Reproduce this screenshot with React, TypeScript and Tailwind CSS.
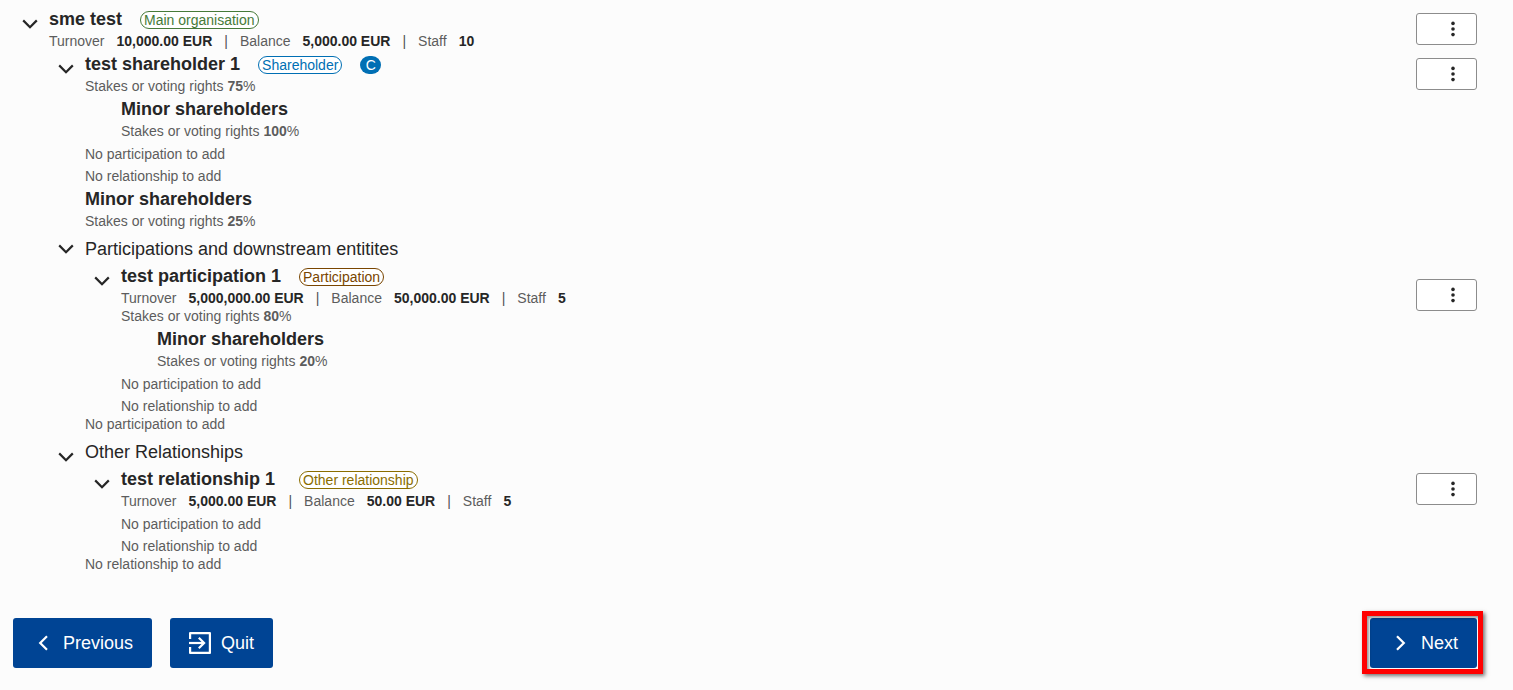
import React, { ReactNode, useState } from "react";

function Chevron({ className }: { className: string }) {
  return (
    <svg viewBox="0 0 16 10" className={className} fill="none" stroke="currentColor" strokeWidth="2.2" aria-hidden="true">
      <path d="M1.2 1.4 L8 8.2 L14.8 1.4" />
    </svg>
  );
}

function Toggle({ open, onClick, label, height = "h-[38px]" }: { open: boolean; onClick: () => void; label: string; height?: string }) {
  return (
    <button
      type="button"
      aria-expanded={open}
      aria-label={label}
      onClick={onClick}
      className={`flex w-9 shrink-0 items-center justify-center pr-0.5 text-[#262626] ${height}`}
    >
      <Chevron className={open ? "h-[10px] w-4" : "h-[10px] w-4 -rotate-90"} />
    </button>
  );
}

function Pill({ color, children }: { color: string; children: ReactNode }) {
  return (
    <span className={`mt-[2px] inline-flex h-[18px] items-center rounded-full border bg-white px-[3px] text-[14px] leading-[16px] ${color}`}>
      {children}
    </span>
  );
}

function MenuButton({ label }: { label: string }) {
  return (
    <div className="pt-[2px]">
      <button
        type="button"
        aria-label={label}
        className="flex h-8 w-[61px] items-center justify-center rounded-[3px] border border-[#8c8c8c] bg-white pl-3 text-[#262626]"
      >
        <svg viewBox="0 0 6 16" className="h-4 w-[6px]" fill="currentColor" aria-hidden="true">
          <circle cx="3" cy="2.4" r="1.8" />
          <circle cx="3" cy="8" r="1.8" />
          <circle cx="3" cy="13.6" r="1.8" />
        </svg>
      </button>
    </div>
  );
}

function Figures({ turnover, balance, staff }: { turnover: string; balance: string; staff: string }) {
  const items = [
    ["Turnover", turnover],
    ["Balance", balance],
    ["Staff", staff],
  ];
  return (
    <div className="flex leading-[18px]">
      {items.map(([name, value], i) => (
        <div key={name} className="flex">
          {i > 0 && <span className="mx-3 text-[#515151]">|</span>}
          <span className="mr-3">{name}</span>
          <strong className="text-[#262626]">{value}</strong>
        </div>
      ))}
    </div>
  );
}

function Stakes({ value }: { value: string }) {
  return (
    <p className="leading-[18px]">
      Stakes or voting rights <strong>{value}</strong>%
    </p>
  );
}

const titleClass = "pt-[2px] text-[18px] leading-[25px] text-[#262626]";

function Minor({ value }: { value: string }) {
  return (
    <li className="pl-9">
      <h3 className={`${titleClass} font-bold`}>Minor shareholders</h3>
      <Stakes value={value} />
    </li>
  );
}

function Notes() {
  return (
    <div className="flex flex-col gap-1 pt-[5px] leading-[18px]">
      <p>No participation to add</p>
      <p>No relationship to add</p>
    </div>
  );
}

function Entity({ name, badges, gap = "gap-[18px]", details, children }: { name: string; badges: ReactNode; gap?: string; details: ReactNode; children: ReactNode }) {
  const [open, setOpen] = useState(true);
  return (
    <li className="flex items-start">
      <Toggle open={open} onClick={() => setOpen(!open)} label={`Toggle ${name}`} />
      <div className="min-w-0 flex-1">
        <div className="flex items-center justify-between">
          <div>
            <div className={`flex h-[27px] items-center ${gap}`}>
              <h3 className={`${titleClass} font-bold`}>{name}</h3>
              {badges}
            </div>
            {details}
          </div>
          <MenuButton label={`Actions for ${name}`} />
        </div>
        {open && children}
      </div>
    </li>
  );
}

function Section({ title, toggleHeight, children }: { title: string; toggleHeight?: string; children: ReactNode }) {
  const [open, setOpen] = useState(true);
  return (
    <li className="mt-[5px] flex items-start">
      <Toggle open={open} onClick={() => setOpen(!open)} label={`Toggle ${title}`} height={toggleHeight} />
      <div className="min-w-0 flex-1">
        <h2 className={titleClass}>{title}</h2>
        {open && children}
      </div>
    </li>
  );
}

const actionClass = "flex h-[50px] items-center rounded-[3px] bg-[#004494] text-[18px] text-white";

export default function App() {
  return (
    <main className="min-h-screen bg-[#fcfcfc] pt-[5px] pr-9 pl-[13px] font-['Liberation_Sans',Arial,sans-serif] text-[14px] text-[#5c5c5c]">
      <ul>
        <Entity
          name="sme test"
          badges={<Pill color="border-[#467a39] text-[#467a39]">Main organisation</Pill>}
          details={<Figures turnover="10,000.00 EUR" balance="5,000.00 EUR" staff="10" />}
        >
          <ul>
            <Entity
              name="test shareholder 1"
              badges={
                <>
                  <Pill color="border-[#006fb4] text-[#006fb4]">Shareholder</Pill>
                  <span className="mt-[2px] flex h-[18px] w-[21px] items-center justify-center rounded-full bg-[#006fb4] leading-[18px] text-white">
                    C
                  </span>
                </>
              }
              details={<Stakes value="75" />}
            >
              <ul>
                <Minor value="100" />
              </ul>
              <Notes />
            </Entity>
            <Minor value="25" />
            <Section title="Participations and downstream entitites" toggleHeight="h-[27px]">
              <ul>
                <Entity
                  name="test participation 1"
                  badges={<Pill color="border-[#794500] text-[#794500]">Participation</Pill>}
                  details={
                    <>
                      <Figures turnover="5,000,000.00 EUR" balance="50,000.00 EUR" staff="5" />
                      <Stakes value="80" />
                    </>
                  }
                >
                  <ul>
                    <Minor value="20" />
                  </ul>
                  <Notes />
                </Entity>
              </ul>
              <p className="leading-[18px]">No participation to add</p>
            </Section>
            <Section title="Other Relationships">
              <ul>
                <Entity
                  name="test relationship 1"
                  gap="gap-6"
                  badges={<Pill color="border-[#8a6d00] text-[#8a6d00]">Other relationship</Pill>}
                  details={<Figures turnover="5,000.00 EUR" balance="50.00 EUR" staff="5" />}
                >
                  <Notes />
                </Entity>
              </ul>
              <p className="leading-[18px]">No relationship to add</p>
            </Section>
          </ul>
        </Entity>
      </ul>

      <footer className="mt-[45px] flex justify-between pb-[22px]">
        <div className="flex gap-[18px]">
          <button type="button" className={`${actionClass} gap-[15px] pr-[19px] pl-[25px]`}>
            <svg viewBox="0 0 10 16" className="h-4 w-[10px]" fill="none" stroke="currentColor" strokeWidth="2.2" aria-hidden="true">
              <path d="M9 1.2 L2.2 8 L9 14.8" />
            </svg>
            Previous
          </button>
          <button type="button" className={`${actionClass} gap-[10px] pr-[19px] pl-[19px]`}>
            <svg viewBox="0 0 22 22" className="size-[22px]" fill="none" stroke="currentColor" strokeWidth="2.2" aria-hidden="true">
              <path d="M1.1 7 V1.1 H20.9 V20.9 H1.1 V15" strokeLinejoin="round" />
              <path d="M0 11 H14.5" />
              <path d="M9.8 5.7 L15.1 11 L9.8 16.3" />
            </svg>
            Quit
          </button>
        </div>
        <div className="relative">
          <button type="button" className={`${actionClass} gap-[15px] pr-[19px] pl-[26px]`}>
            <svg viewBox="0 0 10 16" className="h-4 w-[10px]" fill="none" stroke="currentColor" strokeWidth="2.2" aria-hidden="true">
              <path d="M1 1.2 L7.8 8 L1 14.8" />
            </svg>
            Next
          </button>
          <div className="pointer-events-none absolute -top-[7px] -right-[6px] -bottom-[6px] -left-[8px] border-5 border-[#ff0000] shadow-[2px_2px_4px_rgba(0,0,0,0.55),inset_2px_2px_3px_rgba(0,0,0,0.4)]" />
        </div>
      </footer>
    </main>
  );
}
